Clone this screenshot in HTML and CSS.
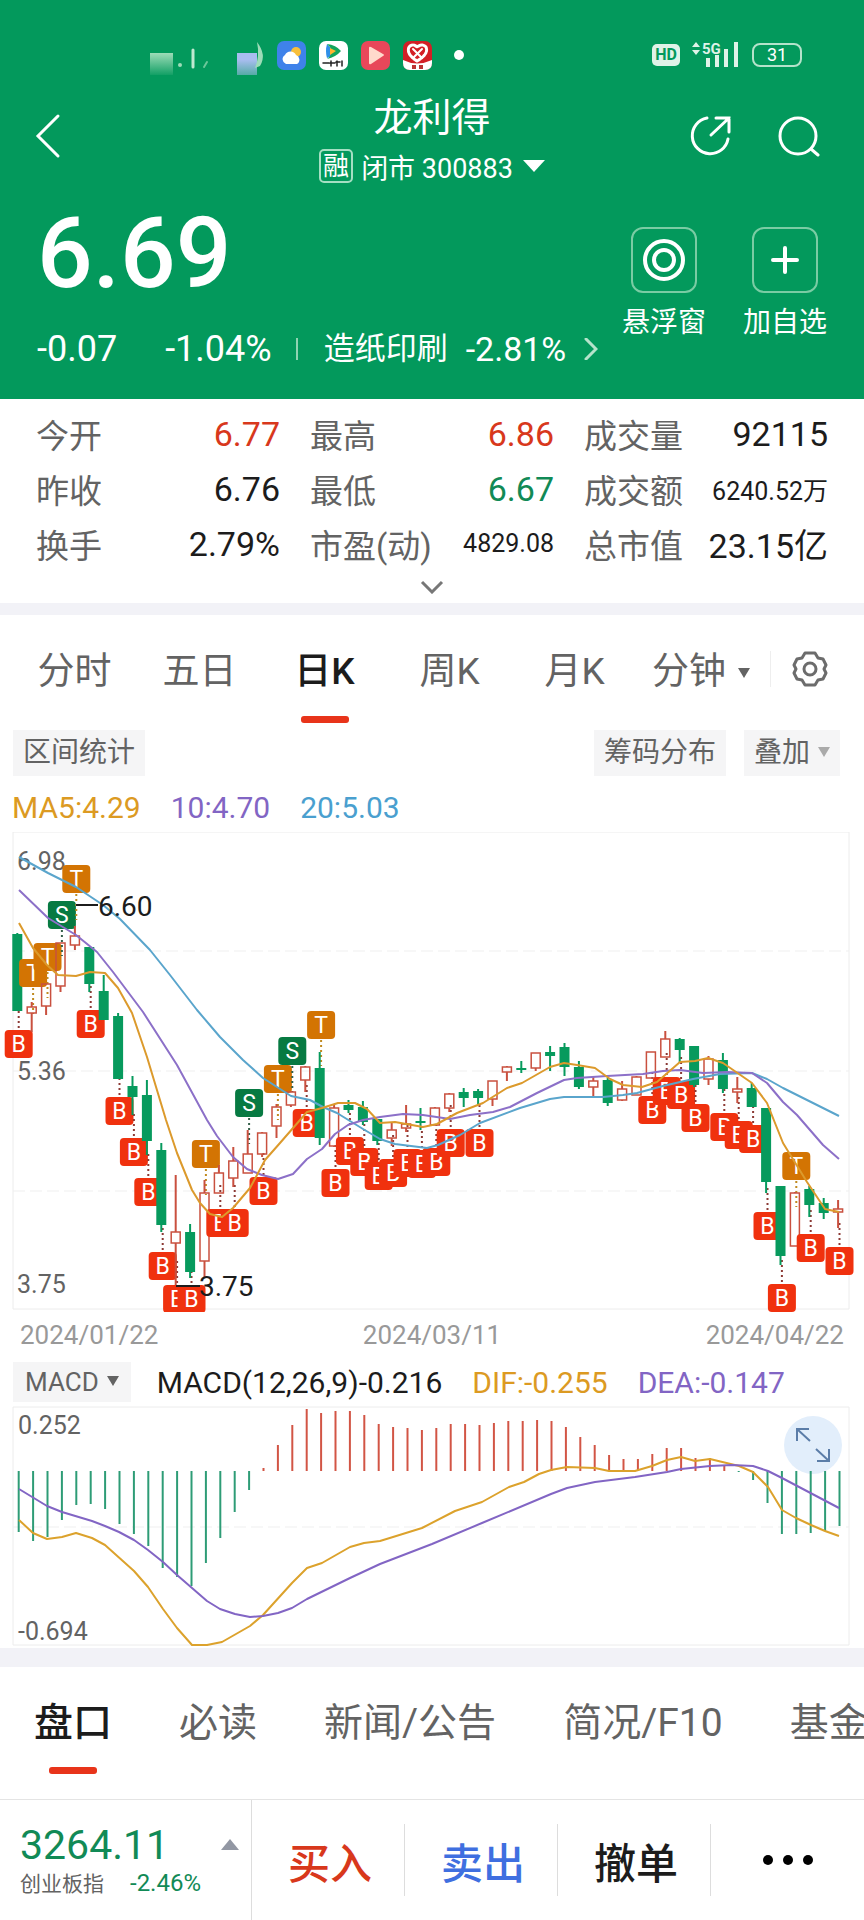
FILE: index.html
```html
<!DOCTYPE html>
<html lang="zh-CN">
<head>
  <meta charset="UTF-8" />
  <meta name="viewport" content="width=device-width, initial-scale=1.0"/>
  <title>龙利得 300883</title>
  <link rel="stylesheet" href="styles.css">
</head>
<body>
  <header class="header">
    <div class="status">
      <div class="status-apps">
        <svg width="120" height="40" viewBox="0 0 120 40">
          <defs>
            <linearGradient id="fade" x1="0" y1="0" x2="0" y2="1">
              <stop offset="0" stop-color="#9ddcb8"/><stop offset="1" stop-color="#9ddcb8" stop-opacity="0.1"/>
            </linearGradient>
            <linearGradient id="fadeBlue" x1="0" y1="0" x2="0" y2="1">
              <stop offset="0.3" stop-color="#a9bdf0"/><stop offset="1" stop-color="#a9bdf0" stop-opacity="0.5"/>
            </linearGradient>
          </defs>
          <rect x="0" y="18" width="23" height="22" fill="url(#fade)"/>
          <circle cx="30" cy="30" r="2" fill="#9ddcb8"/>
          <path d="M43 15v17" stroke="#bfe8d0" stroke-width="3"/>
          <path d="M57 27l-3 5" stroke="#6cc79a" stroke-width="2"/>
          <rect x="87" y="18" width="20" height="22" fill="url(#fadeBlue)"/>
          <path d="M107 7q10 13 3 24l-5 2q5-12 2-26z" fill="#9ddcb8"/>
        </svg>
        <svg width="29" height="29" viewBox="0 0 29 29">
          <rect width="29" height="29" rx="7" fill="#3f82ea"/>
          <circle cx="19" cy="11" r="5" fill="#f7bf3c"/>
          <path d="M9 23a5 5 0 0 1-1-9 6 6 0 0 1 11 0 5 5 0 0 1 1 9z" fill="#fff"/>
        </svg>
        <svg width="29" height="29" viewBox="0 0 29 29">
          <rect width="29" height="29" rx="7" fill="#fff"/>
          <path d="M8 3q-2 7 0 14l5-2V8z" fill="#2f8fe8"/>
          <path d="M8 3q9 1 14 7-5 6-14 8 4-3 5-8-1-4-5-7z" fill="#12a55b"/>
          <path d="M11 7l6 3-6 4z" fill="#ffb52e"/>
          <path d="M4 22h6M12 20v5M11 22h5M18 20v5M17 21h4M23 20v5" stroke="#222" stroke-width="1.5"/>
        </svg>
        <svg width="29" height="29" viewBox="0 0 29 29">
          <rect width="29" height="29" rx="7" fill="#e8475a"/>
          <path d="M8 7q0-2 2-1l12 7q2 1 0 2l-12 8q-2 1-2-1z" fill="#ffd9cc"/>
        </svg>
        <svg width="29" height="29" viewBox="0 0 29 29">
          <rect width="29" height="29" rx="7" fill="#d31f26"/>
          <path d="M0 19q14 7 29 0v3q0 7-7 7H7q-7 0-7-7z" fill="#fff"/>
          <path d="M14 20Q3 13 6 6q4-4 8 0 5-4 9 0 3 7-9 14z" fill="none" stroke="#fff" stroke-width="3" stroke-dasharray="2 1"/>
          <path d="M10 8l9 9M19 8l-9 9" stroke="#fff" stroke-width="2"/>
          <path d="M9 24h4v4H9zM16 24h4v4h-4z" fill="#b33"/>
        </svg>
        <span class="status-dot"></span>
      </div>
      <div class="status-system">
        <span class="hd">HD</span>
        <svg width="48" height="28" viewBox="0 0 48 28" fill="#dff3e8">
          <path d="M0 6l4-5 4 5zM0 9l4 5 4-5z"/>
          <text class="net" x="10" y="13">5G</text>
          <path d="M14 17h4v9h-4zM23 14h4v12h-4zM32 8h4v18h-4zM42 1h4v25h-4z"/>
        </svg>
        <span class="battery">31</span>
      </div>
    </div>

    <div class="title-bar">
      <button class="icon-btn" aria-label="返回">
        <svg width="26" height="46" viewBox="0 0 26 46"><path d="M23 3L3 23l20 20"/></svg>
      </button>
      <div class="title">
        <h1>龙利得</h1>
        <button class="stock-code"><span class="tag">融</span>闭市 300883<i class="caret"></i></button>
      </div>
      <div class="title-actions">
        <button class="icon-btn" aria-label="分享">
          <svg width="42" height="42" viewBox="0 0 42 42"><path d="M17 3a18 18 0 1 0 21 21M21 20L39 3M26 3h13v14"/></svg>
        </button>
        <button class="icon-btn" aria-label="搜索">
          <svg width="42" height="42" viewBox="0 0 42 42"><circle cx="20" cy="21" r="18"/><path d="M33 34l7 6"/></svg>
        </button>
      </div>
    </div>

    <div class="quote">
      <div class="quote-main">
        <div class="price">6.69</div>
        <div class="change">
          <span>-0.07</span>
          <span>-1.04%</span>
          <a class="sector" href="#"><span>造纸印刷</span>-2.81%
            <svg width="14" height="22" viewBox="0 0 14 22"><path d="M2 1l10 10L2 21"/></svg>
          </a>
        </div>
      </div>
      <button class="quick">
        <span class="quick-icon"><svg width="44" height="44" viewBox="0 0 44 44"><circle cx="22" cy="22" r="19"/><circle cx="22" cy="22" r="10"/></svg></span>
        悬浮窗
      </button>
      <button class="quick">
        <span class="quick-icon"><svg width="44" height="44" viewBox="0 0 44 44"><path d="M22 10v24M10 22h24"/></svg></span>
        加自选
      </button>
    </div>
  </header>

  <section class="stats">
    <dl>
      <div><dt>今开</dt><dd class="up">6.77</dd></div>
      <div><dt>最高</dt><dd class="up">6.86</dd></div>
      <div><dt>成交量</dt><dd>92115</dd></div>
      <div><dt>昨收</dt><dd>6.76</dd></div>
      <div><dt>最低</dt><dd class="down">6.67</dd></div>
      <div><dt>成交额</dt><dd class="small">6240.52万</dd></div>
      <div><dt>换手</dt><dd>2.79%</dd></div>
      <div><dt>市盈(动)</dt><dd class="small">4829.08</dd></div>
      <div><dt>总市值</dt><dd>23.15亿</dd></div>
    </dl>
    <button class="expand" aria-label="展开">
      <svg width="24" height="14" viewBox="0 0 24 14"><path d="M2 2l10 10L22 2"/></svg>
    </button>
  </section>

  <nav class="periods">
    <button>分时</button>
    <button>五日</button>
    <button class="active">日K</button>
    <button>周K</button>
    <button>月K</button>
    <button class="minutes">分钟<i class="caret"></i></button>
    <button class="settings" aria-label="设置">
      <svg width="36" height="36" viewBox="0 0 36 36">
        <path d="M13 2h10l3 5 5 1 3 6-2 4 2 4-3 6-5 1-3 5H13l-3-5-5-1-3-6 2-4-2-4 3-6 5-1z"/>
        <circle cx="18" cy="18" r="6"/>
      </svg>
    </button>
  </nav>

  <section class="chart">
    <div class="tools">
      <button class="chip">区间统计</button>
      <button class="chip push">筹码分布</button>
      <button class="chip">叠加<i class="caret"></i></button>
    </div>
    <div class="averages">
      <span class="ma5">MA5:4.29</span>
      <span class="ma10">10:4.70</span>
      <span class="ma20">20:5.03</span>
    </div>
    <svg class="plot" id="kline" viewBox="0 832 864 480">
      <path class="frame" d="M13 832H849V1309H13z"/>
      <path class="grid" d="M13 951H849M13 1071H849M13 1191H849"/>
      <g class="axis">
        <text x="17" y="870">6.98</text>
        <text x="17" y="1080">5.36</text>
        <text x="17" y="1293">3.75</text>
      </g>
      <g id="candles"></g>
      <g class="lines" id="averages"></g>
      <path class="pointer" d="M76 905H98M176 1286H200"/>
      <text class="extreme" x="98" y="916">6.60</text>
      <text class="extreme" x="199" y="1296">3.75</text>
    </svg>
    <div class="dates"><span>2024/01/22</span><span>2024/03/11</span><span>2024/04/22</span></div>

    <div class="macd-head">
      <button class="chip">MACD<i class="caret"></i></button>
      <span>MACD(12,26,9)-0.216</span>
      <span class="ma5">DIF:-0.255</span>
      <span class="ma10">DEA:-0.147</span>
    </div>
    <svg class="plot" id="macd" viewBox="0 1406 864 242">
      <path class="frame" d="M13 1407H849V1645H13z"/>
      <path class="grid" d="M13 1527H849"/>
      <circle cx="813" cy="1445" r="29" fill="#e2eefb"/>
      <path class="resize" d="M797 1441v-12h12M797 1429l13 12M829 1449v12h-12M829 1461l-13-12"/>
      <g id="bars"></g>
      <g class="lines" id="signals"></g>
      <g class="axis">
        <text x="18" y="1434">0.252</text>
        <text x="18" y="1640">-0.694</text>
      </g>
    </svg>
  </section>

  <nav class="info-tabs">
    <button class="active">盘口</button>
    <button>必读</button>
    <button>新闻/公告</button>
    <button>简况/F10</button>
    <button>基金</button>
  </nav>

  <footer class="trade-bar">
    <button class="index">
      <span class="index-value">3264.11</span>
      <i class="caret"></i>
      <span class="index-name">创业板指<b>-2.46%</b></span>
    </button>
    <button class="buy">买入</button>
    <button class="sell">卖出</button>
    <button>撤单</button>
    <button aria-label="更多">
      <svg width="52" height="12" viewBox="0 0 52 12"><circle cx="6" cy="6" r="5"/><circle cx="26" cy="6" r="5"/><circle cx="46" cy="6" r="5"/></svg>
    </button>
  </footer>

  <script src="script.js"></script>
</body>
</html>
```
FILE: styles.css
```css
:root {
  --green: #03995c;
  --up: #d8381c;
  --down: #118a56;
  --text: #1c1c1c;
  --muted: #636363;
  --band: #f2f2f7;
  --chip: #f5f5f6;
  --orange: #dc9a22;
  --purple: #8265c4;
  --blue: #4a9fcf;
}
* {
  box-sizing: border-box;
}
body {
  margin: 0;
  background: #fff;
  color: var(--text);
  font-family: Roboto, "Noto Sans CJK SC", sans-serif;
}
button {
  border: 0;
  padding: 0;
  background: none;
  color: inherit;
  font: inherit;
  white-space: nowrap;
  cursor: pointer;
}
svg {
  display: block;
}
.caret {
  display: inline-block;
  border: 6px solid transparent;
  border-top: 10px solid currentColor;
  border-bottom: 0;
}

/* header */
.header {
  height: 399px;
  background: var(--green);
  color: #fff;
}
.header svg path,
.header svg circle {
  stroke-linecap: round;
}
.status {
  display: flex;
  justify-content: space-between;
  align-items: center;
  padding: 34px 62px 0 150px;
  height: 76px;
}
.status-apps,
.status-system {
  display: flex;
  align-items: center;
}
.status-apps {
  gap: 13px;
}
.status-apps svg:first-child {
  margin-right: -6px;
}
.status-dot {
  width: 10px;
  height: 10px;
  margin-left: 9px;
  border-radius: 50%;
  background: #fff;
}
.status-system {
  gap: 12px;
}
.hd {
  padding: 0 3px;
  border-radius: 5px;
  background: #dff3e8;
  color: var(--green);
  font-size: 16px;
  font-weight: 700;
  line-height: 22px;
}
.net {
  font-size: 15px;
  font-weight: 700;
}
.battery {
  width: 50px;
  border: 2px solid #b5e3cb;
  border-radius: 8px;
  font-size: 18px;
  line-height: 20px;
  text-align: center;
}
.title-bar {
  display: grid;
  grid-template-columns: 1fr auto 1fr;
  align-items: center;
  height: 120px;
  padding: 0 35px;
}
.icon-btn svg,
.quick svg,
.sector svg {
  fill: none;
  stroke: #fff;
  stroke-width: 3;
}
.icon-btn {
  justify-self: start;
}
.title {
  padding-top: 8px;
  text-align: center;
}
h1 {
  margin: 0;
  font-size: 39px;
  font-weight: 400;
  line-height: 52px;
}
.stock-code {
  display: flex;
  align-items: center;
  gap: 8px;
  height: 44px;
  font-size: 27px;
}
.stock-code .caret {
  margin-left: 2px;
  border-width: 12px 11px 0;
}
.tag {
  width: 34px;
  border: 2px solid #a5dfc3;
  border-radius: 5px;
  font-size: 26px;
  line-height: 30px;
}
.title-actions {
  display: flex;
  justify-content: flex-end;
  gap: 46px;
  padding-right: 9px;
}
.quote {
  display: flex;
  align-items: flex-start;
  padding: 0 36px 0 37px;
}
.quote-main {
  flex: 1;
}
.price {
  font-size: 98px;
  font-weight: 500;
  line-height: 116px;
}
.change {
  display: flex;
  align-items: center;
  gap: 48px;
  margin-top: 14px;
  font-size: 36px;
  line-height: 46px;
  white-space: nowrap;
}
.sector {
  display: flex;
  align-items: center;
  gap: 18px;
  margin-left: -24px;
  color: inherit;
  font-size: 34px;
  text-decoration: none;
}
.sector span {
  padding-left: 26px;
  border-left: 2px solid #8fd4b2;
  font-size: 31px;
  line-height: 22px;
}
.sector svg {
  stroke: #b5e3cb;
}
.quick {
  display: grid;
  justify-items: center;
  gap: 10px;
  width: 86px;
  margin-top: 31px;
  font-size: 28px;
  line-height: 40px;
}
.quick + .quick {
  margin-left: 35px;
}
.quick-icon {
  display: grid;
  place-items: center;
  width: 66px;
  height: 66px;
  border: 2px solid #7acca4;
  border-radius: 12px;
}
.quick svg {
  stroke-width: 4;
}

/* quote details */
.stats {
  border-bottom: 12px solid var(--band);
}
.stats dl {
  display: grid;
  grid-template-columns: repeat(3, 1fr);
  grid-auto-rows: 55px;
  column-gap: 30px;
  margin: 0;
  padding: 7px 36px 0;
}
.stats dl div {
  display: flex;
  justify-content: space-between;
  align-items: center;
  white-space: nowrap;
}
dt {
  color: var(--muted);
  font-size: 33px;
}
dd {
  margin: 0;
  font-size: 34px;
}
dd.small {
  font-size: 25px;
}
.up {
  color: var(--up);
}
.down {
  color: var(--down);
}
.expand {
  display: block;
  height: 32px;
  margin: 0 auto;
}
.expand svg {
  fill: none;
  stroke: #777;
  stroke-width: 3;
}

/* period tabs */
.periods {
  display: flex;
  align-items: center;
  height: 115px;
  padding: 0 36px 0 12px;
  color: var(--muted);
  font-size: 37px;
}
.periods button {
  flex: 1 1 0;
  height: 115px;
  padding-bottom: 10px;
}
.periods .minutes,
.periods .settings {
  flex: none;
}
.minutes {
  margin-left: 15px;
}
.minutes .caret {
  margin: 0 0 6px 12px;
}
.settings svg {
  fill: none;
  stroke: #6c6c6c;
  stroke-width: 3;
  stroke-linejoin: round;
}
.periods .settings {
  height: 36px;
  margin: 0 0 8px 20px;
  padding: 0 0 0 21px;
  border-left: 1px solid #eee;
}
.active {
  position: relative;
  color: var(--text);
  font-weight: 500;
}
.active::after {
  content: "";
  position: absolute;
  left: 50%;
  bottom: 7px;
  width: 48px;
  height: 7px;
  margin-left: -24px;
  border-radius: 3px;
  background: #e8341a;
}

/* chart */
.tools {
  display: flex;
  gap: 18px;
  padding: 0 24px 0 13px;
}
.chip {
  padding: 0 10px;
  background: var(--chip);
  color: var(--muted);
  font-size: 28px;
  line-height: 46px;
}
.chip .caret {
  margin: 0 0 5px 8px;
}
.tools .caret {
  color: #aaa;
}
.push {
  margin-left: auto;
}
.averages {
  display: flex;
  gap: 30px;
  padding: 8px 12px 0;
  font-size: 30px;
  line-height: 48px;
}
.ma5 {
  color: var(--orange);
}
.ma10 {
  color: var(--purple);
}
.ma20 {
  color: var(--blue);
}
.plot {
  width: 100%;
  height: auto;
}
.plot path {
  fill: none;
}
.frame {
  stroke: #ececec;
}
.grid {
  stroke: #efefef;
  stroke-dasharray: 12 5;
}
.axis {
  fill: #636363;
  font-size: 25px;
}
.extreme {
  fill: #1c1c1c;
  font-size: 28px;
}
.pointer {
  stroke: #1c1c1c;
  stroke-width: 2;
}
.lines path {
  stroke-width: 2;
  stroke-linejoin: round;
}
.resize {
  stroke: #5b7da8;
  stroke-width: 2;
}
.badge {
  fill: #fff;
  font-size: 23px;
  text-anchor: middle;
}
.dates {
  display: flex;
  justify-content: space-between;
  padding: 0 20px;
  color: #999;
  font-size: 26px;
  line-height: 46px;
}
.macd-head {
  display: flex;
  align-items: center;
  gap: 30px;
  height: 48px;
  padding-left: 13px;
  font-size: 30px;
  white-space: nowrap;
}
.macd-head .chip {
  padding: 0 12px;
  margin-right: -4px;
  font-size: 26px;
  line-height: 40px;
}

/* info tabs */
.info-tabs {
  display: flex;
  gap: 67px;
  height: 151px;
  padding-left: 34px;
  border-top: 19px solid var(--band);
  overflow: hidden;
  color: var(--muted);
  font-size: 39px;
}
.info-tabs button {
  flex: none;
  height: 107px;
  padding-bottom: 4px;
}
.info-tabs .active::after {
  bottom: 0;
}

/* bottom bar */
.trade-bar {
  display: grid;
  grid-template-columns: 252px repeat(4, 1fr);
  align-items: center;
  height: 121px;
  border-top: 1px solid #e4e4e4;
  font-size: 42px;
  font-weight: 500;
}
.trade-bar button {
  display: grid;
  place-items: center;
  height: 72px;
  padding-left: 4px;
  border-right: 1px solid #ddd;
}
.trade-bar button:last-child {
  padding-left: 0;
  border-right: 0;
}
.trade-bar .index {
  grid-template-columns: 1fr auto;
  align-content: center;
  justify-items: start;
  height: 120px;
  padding: 0 12px 0 20px;
  font-weight: 400;
}
.index-value {
  color: var(--down);
  font-size: 41px;
  line-height: 46px;
}
.index .caret {
  border: 9px solid transparent;
  border-top: 0;
  border-bottom: 11px solid #9297a3;
}
.index-name {
  grid-column: span 2;
  color: var(--muted);
  font-size: 21px;
  line-height: 30px;
}
.index-name b {
  margin-left: 26px;
  color: var(--down);
  font-size: 24px;
  font-weight: 400;
}
.trade-bar .buy {
  color: var(--up);
}
.trade-bar .sell {
  color: #3f6fe0;
}
```
FILE: script.js
```javascript
(() => {
  const STEP = 14.4;
  const GREEN = '#079a5d';
  const RED = '#c9503f';

  // [direction, high, body top, body bottom, low]
  const candles = [
    ['g', 933, 934, 1011, 1011], ['r', 1002, 1007, 1013, 1032], ['r', 984, 984, 1006, 1015],
    ['r', 943, 943, 986, 992], ['r', 926, 936, 945, 950], ['g', 947, 947, 984, 992],
    ['g', 975, 991, 1020, 1020], ['g', 1013, 1016, 1079, 1079], ['g', 1076, 1086, 1097, 1115],
    ['g', 1080, 1095, 1141, 1155], ['g', 1143, 1150, 1225, 1232], ['r', 1175, 1232, 1243, 1285],
    ['g', 1224, 1232, 1272, 1278], ['r', 1180, 1193, 1261, 1277], ['r', 1165, 1173, 1193, 1193],
    ['r', 1147, 1161, 1178, 1187], ['r', 1130, 1154, 1173, 1173], ['r', 1132, 1133, 1154, 1157],
    ['r', 1104, 1107, 1126, 1138], ['r', 1091, 1092, 1105, 1107], ['r', 1066, 1067, 1080, 1092],
    ['g', 1052, 1068, 1138, 1145], ['r', 1105, 1108, 1146, 1147], ['g', 1100, 1105, 1110, 1113],
    ['g', 1101, 1107, 1122, 1125], ['g', 1119, 1119, 1141, 1145], ['r', 1122, 1130, 1138, 1146],
    ['r', 1105, 1124, 1128, 1132], ['g', 1108, 1121, 1123, 1130], ['r', 1107, 1108, 1125, 1125],
    ['r', 1093, 1094, 1108, 1112], ['g', 1088, 1092, 1098, 1107], ['g', 1089, 1091, 1098, 1105],
    ['r', 1081, 1081, 1099, 1106], ['r', 1066, 1067, 1072, 1081], ['g', 1061, 1068, 1070, 1073],
    ['r', 1053, 1053, 1068, 1071], ['g', 1046, 1052, 1056, 1071], ['g', 1043, 1047, 1067, 1076],
    ['g', 1061, 1067, 1087, 1089], ['r', 1076, 1081, 1087, 1097], ['g', 1078, 1080, 1103, 1106],
    ['r', 1081, 1089, 1100, 1101], ['r', 1076, 1077, 1095, 1095], ['r', 1052, 1052, 1078, 1078],
    ['r', 1031, 1039, 1057, 1057], ['g', 1038, 1039, 1050, 1063], ['g', 1046, 1046, 1085, 1087],
    ['r', 1056, 1059, 1079, 1085], ['g', 1053, 1060, 1089, 1093], ['r', 1077, 1089, 1092, 1103],
    ['g', 1083, 1088, 1107, 1107], ['g', 1108, 1108, 1182, 1193], ['g', 1186, 1186, 1256, 1265],
    ['r', 1192, 1193, 1246, 1246], ['g', 1186, 1189, 1205, 1217], ['g', 1198, 1203, 1213, 1219],
    ['r', 1200, 1209, 1212, 1228]
  ];

  // candle index: [letter, centre y]
  const badges = {
    0: ['B', 1044], 1: ['T', 973], 2: ['T', 957], 3: ['S', 915], 4: ['T', 879], 5: ['B', 1024],
    7: ['B', 1111], 8: ['B', 1152], 9: ['B', 1192], 10: ['B', 1266], 11: ['B', 1299], 12: ['B', 1299],
    13: ['T', 1154], 14: ['B', 1223], 15: ['B', 1223], 16: ['S', 1103], 17: ['B', 1191], 18: ['T', 1079],
    19: ['S', 1051], 20: ['B', 1123], 21: ['T', 1025], 22: ['B', 1183], 23: ['B', 1151], 24: ['B', 1162],
    25: ['B', 1176], 26: ['B', 1173], 27: ['B', 1163], 28: ['B', 1164], 29: ['B', 1162], 30: ['B', 1143],
    32: ['B', 1143], 44: ['B', 1110], 45: ['B', 1091], 46: ['B', 1095], 47: ['B', 1118], 49: ['B', 1127],
    50: ['B', 1135], 51: ['B', 1139], 52: ['B', 1226], 53: ['B', 1298], 54: ['T', 1166], 55: ['B', 1248],
    57: ['B', 1261]
  };
  const fills = { B: '#f0310e', T: '#d37403', S: '#077a42' };
  const dots = { B: '#8c3a35', T: '#c08a20', S: '#35604a' };

  const averages = {
    '#5aa5cc': '19,857 48,873 76,887 103,905 120,919 150,950 170,975 197,1010 220,1037 243,1060 263,1078 291,1096 310,1100 323,1107 337,1113 363,1129 380,1139 395,1144 427,1148 438,1145 460,1135 480,1123 520,1108 550,1099 564,1097 603,1097 623,1095 637,1093 663,1086 693,1079 720,1074 752,1073 767,1079 783,1088 807,1100 839,1116',
    '#8c70c8': '19,890 48,918 76,935 97,952 113,972 143,1012 177,1065 207,1120 217,1136 233,1157 247,1169 262,1175 278,1179 293,1174 307,1159 322,1149 335,1134 348,1125 363,1120 380,1117 403,1114 423,1115 450,1119 470,1115 493,1112 510,1107 537,1093 564,1080 577,1078 607,1076 643,1074 663,1071 680,1070 703,1073 727,1072 752,1073 767,1083 783,1102 797,1115 823,1145 839,1159',
    '#dc9a2c': '19,923 33,948 47,965 58,975 76,976 90,972 105,973 118,988 132,1013 147,1057 166,1120 177,1153 192,1190 200,1203 210,1214 222,1217 233,1208 250,1188 265,1160 280,1143 307,1112 322,1108 338,1103 355,1103 367,1109 380,1123 395,1122 423,1127 437,1124 457,1113 483,1103 507,1088 522,1083 550,1067 564,1063 577,1065 595,1068 610,1079 623,1085 642,1087 657,1082 680,1062 695,1061 708,1058 723,1063 752,1083 767,1103 783,1143 807,1182 825,1209 839,1212'
  };

  const ZERO = 1471;
  const bars = [
    1532, 1541, 1537, 1520, 1505, 1504, 1509, 1524, 1534, 1546, 1568, 1577, 1586, 1563, 1538,
    1512, 1490, 1468, 1445, 1425, 1409, 1413, 1411, 1411, 1415, 1424, 1427, 1428, 1430, 1428,
    1424, 1424, 1425, 1423, 1421, 1421, 1420, 1421, 1427, 1437, 1445, 1455, 1459, 1459, 1454,
    1448, 1448, 1458, 1458, 1466, 1472, 1480, 1503, 1534, 1534, 1533, 1531, 1526
  ];
  const signals = {
    '#dca22c': '19,1520 33,1533 47,1539 62,1537 76,1533 92,1538 105,1545 134,1571 148,1587 163,1609 177,1628 192,1645 207,1645 222,1642 250,1626 263,1615 292,1583 307,1568 322,1563 336,1555 350,1547 364,1543 380,1541 393,1537 422,1528 455,1511 482,1502 509,1487 524,1482 539,1474 551,1470 567,1467 595,1468 609,1471 635,1471 652,1466 667,1460 681,1457 695,1461 710,1459 739,1466 753,1472 768,1487 782,1510 796,1518 811,1525 825,1531 839,1536',
    '#8265c4': '19,1489 47,1506 62,1512 92,1521 105,1526 119,1532 134,1540 148,1550 163,1562 177,1575 192,1588 207,1601 220,1609 235,1614 250,1617 263,1616 278,1613 292,1608 307,1599 350,1578 380,1564 432,1544 482,1523 551,1494 567,1488 595,1482 635,1477 667,1472 681,1469 710,1466 732,1465 753,1466 768,1471 782,1478 839,1508'
  };

  const line = (x, y1, y2, color, extra = '') =>
    `<line x1="${x}" x2="${x}" y1="${y1}" y2="${y2}" stroke="${color}" stroke-width="2" ${extra}/>`;

  function candle([dir, high, top, bottom, low], i) {
    const x = 17.3 + STEP * i;
    const color = dir === 'g' ? GREEN : RED;
    const body = dir === 'g'
      ? `<rect x="${x - 5}" y="${top}" width="10" height="${bottom - top}" fill="${GREEN}"/>`
      : `<rect x="${x - 4.5}" y="${top}" width="9" height="${bottom - top}" fill="none" stroke="${RED}" stroke-width="1.5"/>`;
    return line(x, high, top, color) + line(x, bottom, low, color) + body;
  }

  function stem(i) {
    if (!badges[i]) return '';
    const [type, y] = badges[i];
    const x = 18.7 + STEP * i;
    return type === 'B'
      ? line(x, y - 38, y - 16, dots.B, 'stroke-dasharray="2 3"')
      : line(x, y + 15, y + 41, dots[type], 'stroke-dasharray="2 3"');
  }

  function badge(i) {
    if (!badges[i]) return '';
    const [type, y] = badges[i];
    const x = 18.7 + STEP * i;
    return `<rect x="${x - 14}" y="${y - 14}" width="28" height="28" rx="4" fill="${fills[type]}"/>` +
      `<text class="badge" x="${x}" y="${y + 8}">${type}</text>`;
  }

  function curves(set) {
    return Object.entries(set)
      .map(([color, points]) => `<path d="M${points.split(' ').join('L')}" stroke="${color}"/>`)
      .join('');
  }

  // later candles overlap the badge of the one before
  document.getElementById('candles').innerHTML =
    candles.map((c, i) => stem(i) + candle(c, i) + badge(i)).join('');
  document.getElementById('averages').innerHTML = curves(averages);
  document.getElementById('bars').innerHTML = bars
    .map((y, i) => line(18.7 + STEP * i, ZERO, y, y > ZERO ? '#2e9c76' : '#d25545'))
    .join('');
  document.getElementById('signals').innerHTML = curves(signals);
})();
```
